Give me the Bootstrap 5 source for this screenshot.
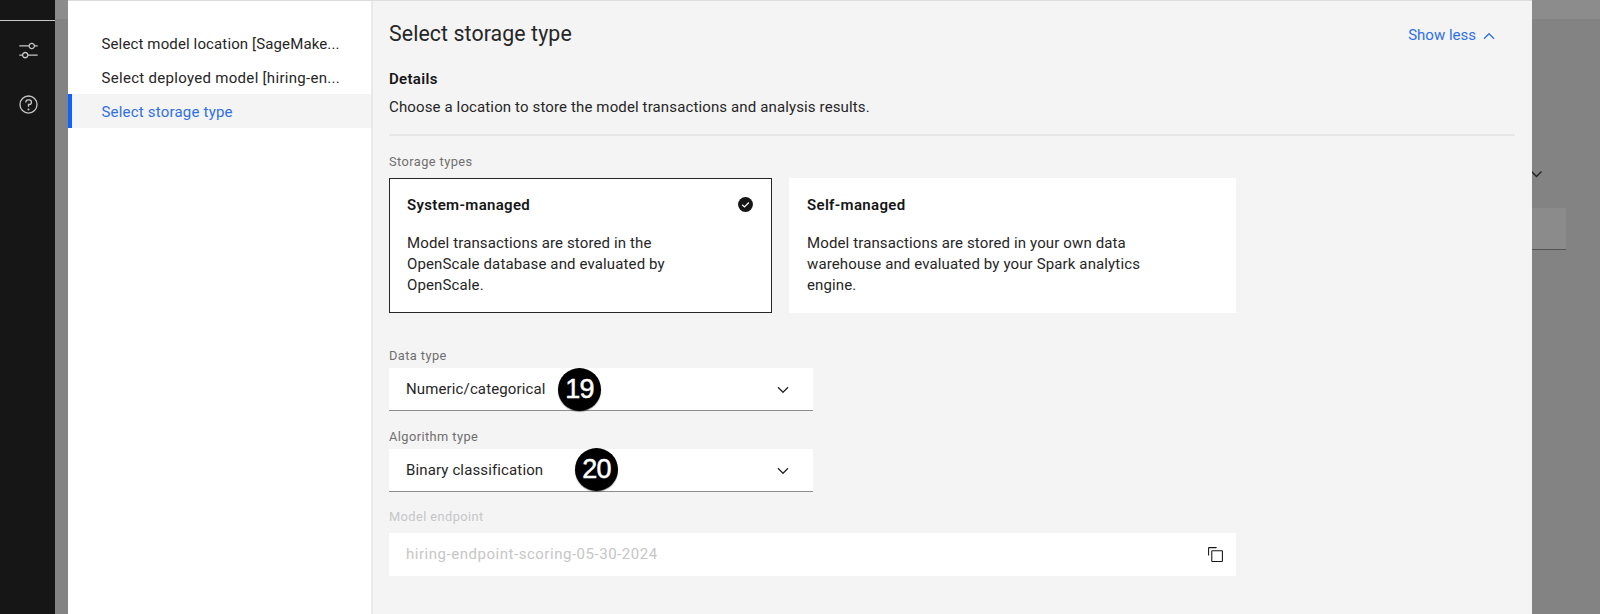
<!DOCTYPE html>
<html lang="en">
<head>
<meta charset="utf-8">
<meta name="viewport" content="width=device-width, initial-scale=1">
<title>Select storage type</title>
<link href="https://cdn.jsdelivr.net/npm/bootstrap@5.3.0/dist/css/bootstrap.min.css" rel="stylesheet">
<style>
  body { height: 614px; overflow: hidden; background: #838383; color: #262626; font-family: Roboto, "Liberation Sans", sans-serif; font-size: 15px; line-height: 21.2px; letter-spacing: .13px; }
  svg { display: block; flex: none; }
  .rail { width: 55px; background: #161616; color: #c6c6c6; }
  .rail-top { height: 21px; border-bottom: 1px solid #c6c6c6; }
  .rail-icons { padding: 19px 0 0 2px; gap: 33px; }
  .gutter { width: 13px; }
  .shade-bar { height: 19px; background: #8c8c8c; }
  .dialog-box { width: 1464px; border-top: 1px solid #dcdcdc; background: #f4f4f4; }
  .steps { width: 305px; background: #fff; border-right: 2px solid #e9e9e9; padding-top: 25px; }
  .step { height: 34px; padding: 3px 0 0 29.500px; border-left: 4px solid transparent; border-radius: 0; color: #262626; }
  .step.current { background: #f4f4f4; border-color: #0f62fe; color: #2f6fe8; letter-spacing: .2px; }
  .looser { letter-spacing: .3px; }
  .pane { padding: 0 17px 0 16px; }
  .pane-head { height: 64px; padding-right: 20px; }
  .pane-head h1 { font-size: 21.3px; line-height: 28px; letter-spacing: .1px; margin: 19px 0 0; font-weight: 400; }
  .less { color: #2f6fe8; margin-top: 24px; gap: 7px; letter-spacing: 0; }
  .bold-text { font-size: 15px; line-height: 21.2px; letter-spacing: .33px; font-weight: 600; margin: 0; color: #161616; }
  .intro { margin: 7px 0 0; }
  .rule { height: 2px; background: #e6e6e6; margin-top: 16px; }
  .lbl { font-size: 12.8px; line-height: 17px; letter-spacing: .43px; color: #6f6f6f; }
  .tiles { gap: 17px; height: 135px; margin-top: 8px; }
  .tile { background: #fff; padding: 17px 18px; }
  .tile.chosen { width: 383px; border: 1px solid #262626; padding: 16px 17px; }
  .tile.other { width: 447px; }
  .tile p { margin: 16px 0 0; }
  .check { margin-top: -3px; }
  .picker { width: 424px; height: 43px; background: #fff; border-bottom: 1px solid #8d8d8d; padding: 1px 23px 0 17px; }
  .endpoint { width: 847px; height: 43px; background: #fff; padding: 0 12px 0 17px; letter-spacing: .53px; }
  .faint { color: #c6c6c6; }
  .pin { position: absolute; width: 43px; height: 43px; border-radius: 50%; background: #000; color: #fff; font: 27px/43px "Liberation Sans", sans-serif; letter-spacing: -.8px; text-align: center; -webkit-text-stroke: .5px #fff; box-shadow: 0 1px 1px #0006; }
  .pin-a { left: 169px; top: 0; }
  .pin-b { left: 186px; top: -1px; }
  .back { width: 68px; }
  .back-arrow { margin-top: 151px; }
  .back-field { width: 34px; height: 42px; background: #8b8b8b; border-bottom: 1px solid #555; margin-top: 28px; }
</style>
</head>
<body class="d-flex">
<aside class="rail flex-shrink-0">
  <div class="rail-top"></div>
  <div class="rail-icons d-flex flex-column align-items-center">
    <svg width="21" height="21" viewBox="0 0 32 32" fill="currentColor"><path d="M30 8h-4.1c-.5-2.3-2.5-4-4.9-4s-4.4 1.7-4.9 4H2v2h14.1c.5 2.3 2.5 4 4.9 4s4.4-1.7 4.9-4H30V8zm-9 4c-1.700 0-3-1.300-3-3s1.300-3 3-3 3 1.300 3 3-1.300 3-3 3zM2 24h4.100c.5 2.300 2.500 4 4.900 4s4.400-1.700 4.900-4H30v-2H15.900c-.5-2.300-2.500-4-4.900-4s-4.400 1.700-4.900 4H2v2zm9-4c1.700 0 3 1.300 3 3s-1.300 3-3 3-3-1.300-3-3 1.300-3 3-3z"/></svg>
    <svg width="21" height="21" viewBox="0 0 32 32" fill="currentColor"><path d="M16 2a14 14 0 1 0 14 14A14 14 0 0 0 16 2zm0 26a12 12 0 1 1 12-12 12 12 0 0 1-12 12z"/><circle cx="16" cy="23.500" r="1.500"/><path d="M17 8h-1.500A4.490 4.490 0 0 0 11 12.500v.5h2v-.5a2.500 2.500 0 0 1 2.500-2.500H17a2.500 2.500 0 0 1 0 5h-2v4.500h2V17a4.500 4.500 0 0 0 0-9z"/></svg>
  </div>
</aside>
<div class="gutter flex-shrink-0"><div class="shade-bar"></div></div>
<div class="dialog-box d-flex flex-shrink-0">
  <nav class="steps list-group list-group-flush flex-shrink-0">
    <div class="step d-flex align-items-center">Select model location [SageMake...</div>
    <div class="step looser d-flex align-items-center">Select deployed model [hiring-en...</div>
    <div class="step current d-flex align-items-center">Select storage type</div>
  </nav>
  <main class="pane flex-grow-1">
    <header class="pane-head d-flex justify-content-between align-items-start">
      <h1>Select storage type</h1>
      <div class="less d-flex align-items-center"><span>Show less</span>
        <svg width="12" height="8" viewBox="0 0 12 8" fill="none" stroke="currentColor" stroke-width="1.300"><path d="M1 6.700 6 1.700l5 5"/></svg>
      </div>
    </header>
    <h2 class="bold-text pt-1">Details</h2>
    <p class="intro">Choose a location to store the model transactions and analysis results.</p>
    <div class="rule"></div>
    <div class="lbl" style="padding-top:17px">Storage types</div>
    <section class="tiles d-flex">
      <div class="tile chosen">
        <div class="d-flex justify-content-between align-items-center">
          <h3 class="bold-text">System-managed</h3>
          <svg class="check" width="17" height="17" viewBox="0 0 16 16"><circle cx="8" cy="8" r="7" fill="#161616"/><path d="m4.900 8.200 2.100 2.100 4.200-4.200" fill="none" stroke="#fff" stroke-width="1.100"/></svg>
        </div>
        <p>Model transactions are stored in the<br>OpenScale database and evaluated by<br>OpenScale.</p>
      </div>
      <div class="tile other">
        <h3 class="bold-text">Self-managed</h3>
        <p>Model transactions are stored in your own data<br>warehouse and evaluated by your Spark analytics<br>engine.</p>
      </div>
    </section>
    <div class="lbl" style="margin-top:34px;margin-bottom:4px">Data type</div>
    <div class="picker position-relative d-flex align-items-center justify-content-between">
      <span>Numeric/categorical</span>
      <svg width="14" height="8" viewBox="0 0 14 8" fill="none" stroke="#262626" stroke-width="1.300"><path d="m2 1.300 5 5 5-5"/></svg>
      <div class="pin pin-a">19</div>
    </div>
    <div class="lbl" style="margin-top:17px;margin-bottom:4px">Algorithm type</div>
    <div class="picker position-relative d-flex align-items-center justify-content-between">
      <span>Binary classification</span>
      <svg width="14" height="8" viewBox="0 0 14 8" fill="none" stroke="#262626" stroke-width="1.300"><path d="m2 1.300 5 5 5-5"/></svg>
      <div class="pin pin-b">20</div>
    </div>
    <div class="lbl faint" style="margin-top:16px;margin-bottom:8px">Model endpoint</div>
    <div class="endpoint d-flex align-items-center justify-content-between">
      <span class="faint">hiring-endpoint-scoring-05-30-2024</span>
      <svg width="17" height="17" viewBox="0 0 32 32" fill="#161616"><path d="M28 10v18H10V10h18m0-2H10a2 2 0 0 0-2 2v18a2 2 0 0 0 2 2h18a2 2 0 0 0 2-2V10a2 2 0 0 0-2-2z"/><path d="M4 18H2V4a2 2 0 0 1 2-2h14v2H4z"/></svg>
    </div>
  </main>
</div>
<div class="back flex-shrink-0">
  <div class="shade-bar"></div>
  <svg class="back-arrow" width="11" height="10" viewBox="0 0 11 10" fill="none" stroke="#222" stroke-width="1.400"><path d="m-.5 1.500 5 5 5-5"/></svg>
  <div class="back-field"></div>
</div>
<script src="https://cdn.jsdelivr.net/npm/bootstrap@5.3.0/dist/js/bootstrap.bundle.min.js"></script>
</body>
</html>
